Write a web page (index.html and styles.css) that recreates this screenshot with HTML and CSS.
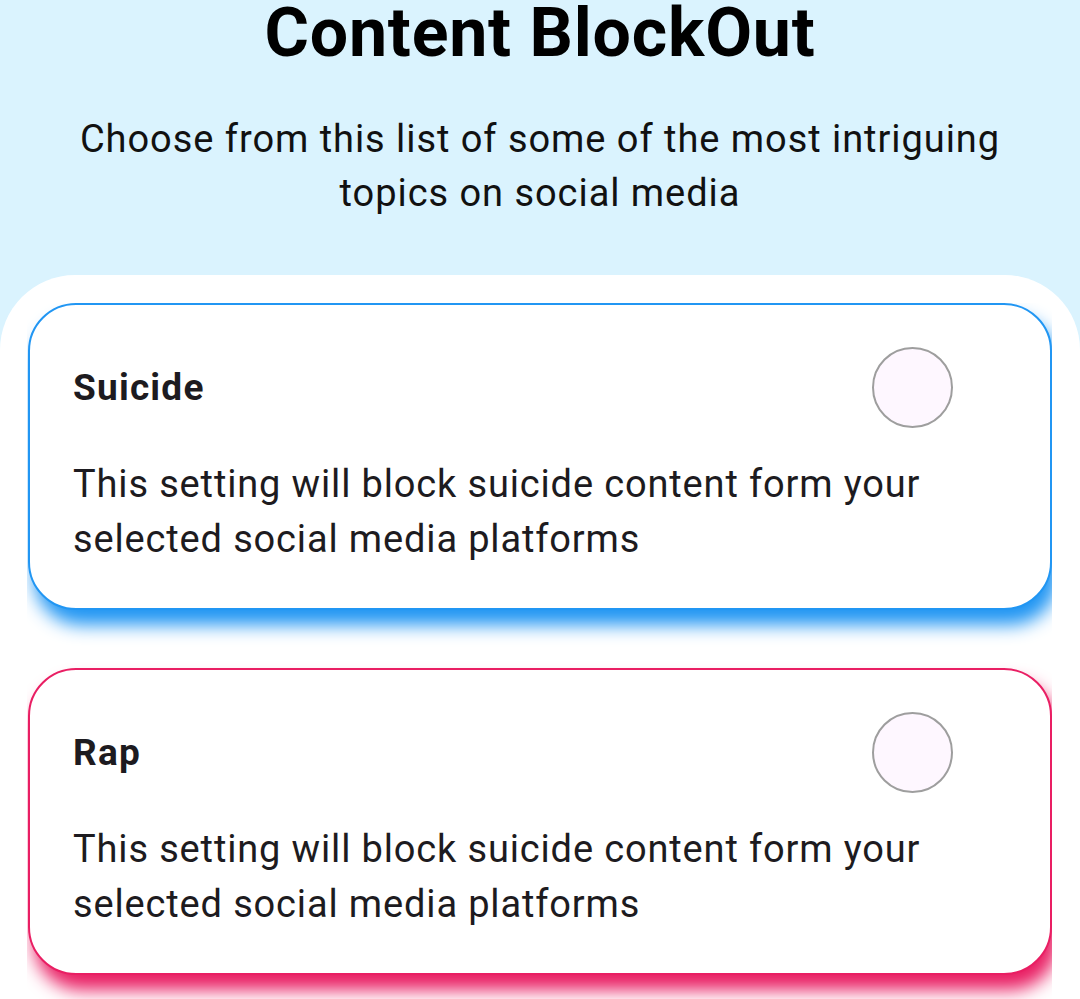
FILE: index.html
```html
<!DOCTYPE html>
<html>
<head>
<meta charset="utf-8">
<link rel="stylesheet" href="styles.css">
</head>
<body>
<div class="page">
  <header class="header">
    <h1 class="title">Content BlockOut</h1>
    <p class="subtitle">Choose from this list of some of the most intriguing topics on social media</p>
  </header>
  <main class="panel">
    <div class="list">
      <div class="card card-blue">
        <div class="card-row">
          <h2 class="card-title">Suicide</h2>
          <span class="radio"></span>
        </div>
        <p class="card-desc">This setting will block suicide content form your selected social media platforms</p>
      </div>
      <div class="card card-pink">
        <div class="card-row">
          <h2 class="card-title">Rap</h2>
          <span class="radio"></span>
        </div>
        <p class="card-desc">This setting will block suicide content form your selected social media platforms</p>
      </div>
    </div>
  </main>
</div>
</body>
</html>
```

FILE: styles.css
```css
html, body {
  margin: 0;
  padding: 0;
  height: 999px;
  overflow: hidden;
  background: #daf3fe;
  font-family: Roboto, "Noto Sans", sans-serif;
}
.page {
  display: flex;
  flex-direction: column;
  height: 999px;
}
.header {
  height: 275px;
  text-align: center;
  box-sizing: border-box;
}
.title {
  margin: 0;
  font-size: 68px;
  line-height: 66px;
  font-weight: 700;
  letter-spacing: 0.8px;
  color: #000;
}
.subtitle {
  margin: 46px auto 0;
  width: 960px;
  font-size: 38px;
  line-height: 54px;
  color: #111;
  letter-spacing: 0.95px;
}
.panel {
  flex: 1;
  background: #fff;
  border-radius: 75px 75px 0 0;
  padding: 28px 28px 0 27px;
  overflow: hidden;
}
.list {
  height: 100%;
  overflow: hidden;
  display: flex;
  flex-direction: column;
  gap: 58px;
}
.card {
  background: #fff;
  border: 2px solid;
  border-radius: 48px;
  padding: 44px 97px 41px 43px;
  flex: none;
  margin-left: 1px;
}
.card-blue {
  border-color: #2196f3;
  box-shadow: 6px 15px 18px 0 #2196f3;
}
.card-pink {
  border-color: #e91e63;
  box-shadow: 6px 15px 18px 0 #e91e63;
}
.card-row {
  display: flex;
  align-items: center;
  justify-content: space-between;
  height: 81px;
  margin-top: -2px;
}
.card-title {
  margin: 0;
  font-size: 37px;
  font-weight: 700;
  letter-spacing: 1.2px;
  color: #1d1b20;
}
.radio {
  width: 77px;
  height: 77px;
  border: 2px solid #9e9e9e;
  border-radius: 50%;
  background: #fef7ff;
}
.card-desc {
  margin: 29px 0 0;
  font-size: 38px;
  line-height: 55px;
  color: #1d1b20;
  letter-spacing: 0.85px;
}
```
